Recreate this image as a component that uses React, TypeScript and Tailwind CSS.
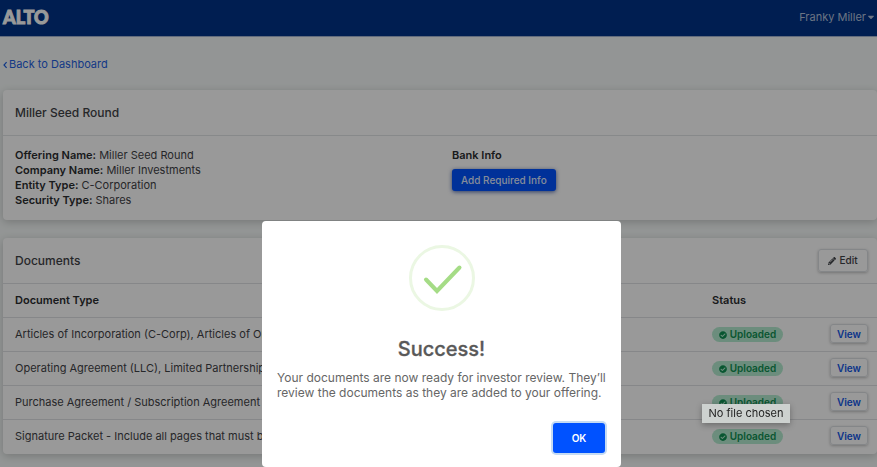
import { FaCaretDown, FaCheckCircle, FaPencilAlt } from 'react-icons/fa';

const details = [
  { label: 'Offering Name:', value: 'Miller Seed Round' },
  { label: 'Company Name:', value: 'Miller Investments' },
  { label: 'Entity Type:', value: 'C-Corporation' },
  { label: 'Security Type:', value: 'Shares' },
];

const documents = [
  'Articles of Incorporation (C-Corp), Articles of Organization (LLC)',
  'Operating Agreement (LLC), Limited Partnership Agreement (LP)',
  'Purchase Agreement / Subscription Agreement',
  'Signature Packet - Include all pages that must be signed',
];

export default function App() {
  return (
    <div className="min-h-screen bg-[#f5f9f8] font-['Inter',sans-serif] text-[11px] leading-[15px] text-[#3f4246]">
      <header className="flex h-[37px] items-center justify-between border-b border-[#a3b4d0] bg-[#003287] pb-[2px] pl-[3px] pr-px">
        <a href="#" className="font-['Lato',sans-serif] text-[18px] font-black leading-[24px] text-white [-webkit-text-stroke:1px_white]">ALTO</a>
        <button className="flex items-center text-[#b3c1db]">
          Franky Miller
          <FaCaretDown className="size-2.5" />
        </button>
      </header>

      <main className="pl-[3px]">
        <a href="#" className="mt-[20px] flex w-fit items-center text-[#1f5fe0]">
          <svg viewBox="0 0 6 8" fill="none" className="h-2 w-[6px]">
            <path d="M3.6 1.2 1 4l2.6 2.8" stroke="currentColor" strokeWidth="1.2" />
          </svg>
          Back to Dashboard
        </a>

        <section className="mt-[18px] rounded bg-white shadow-[0_2px_8px_rgba(0,0,0,0.2)]">
          <h2 className="flex h-[46px] items-center border-b border-[#e2e4e6] px-3 text-[12px] font-medium">Miller Seed Round</h2>
          <div className="grid grid-cols-2 gap-6 px-3 py-3">
            <dl>
              {details.map((item) => (
                <div key={item.label} className="flex gap-[3px]">
                  <dt className="font-semibold text-[#2b2d30]">{item.label}</dt>
                  <dd>{item.value}</dd>
                </div>
              ))}
            </dl>
            <div>
              <h3 className="font-semibold text-[#2b2d30]">Bank Info</h3>
              <button className="mt-[6px] h-[22px] rounded-[3px] bg-[#0052ff] px-[9px] text-[10px] font-medium leading-[15px] text-[#dfe8ff] shadow-[0_1px_4px_rgba(0,40,140,0.7)]">
                Add Required Info
              </button>
            </div>
          </div>
        </section>

        <section className="mt-[18px] rounded bg-white shadow-[0_2px_8px_rgba(0,0,0,0.2)]">
          <div className="flex h-[45px] items-center justify-between pl-3 pr-[9px]">
            <h2 className="text-[12px] font-medium">Documents</h2>
            <button className="flex h-[23px] w-[50px] items-center justify-center gap-[3px] rounded-[3px] border border-[#dcdfe3] text-[10px] font-medium shadow-[0_1px_3px_rgba(0,0,0,0.25)]">
              <FaPencilAlt className="size-2" />
              Edit
            </button>
          </div>
          <table className="w-full table-fixed text-left">
            <thead>
              <tr className="h-[34px] border-t border-[#dfe2e5] text-[#2b2d30]">
                <th className="pl-3 font-semibold">Document Type</th>
                <th className="w-[90px] font-semibold">Status</th>
                <th className="w-[75px]" />
              </tr>
            </thead>
            <tbody>
              {documents.map((name) => (
                <tr key={name} className="h-[34px] border-t border-[#dfe2e5]">
                  <td className="truncate pl-3">{name}</td>
                  <td>
                    <span className="flex h-[15px] w-[71px] items-center justify-center gap-[3px] rounded-full bg-[#b5ecd0] text-[10px] font-semibold text-[#0f8f52]">
                      <FaCheckCircle className="size-2" />
                      Uploaded
                    </span>
                  </td>
                  <td className="pb-[2px] pr-[9px]">
                    <button className="ml-auto block h-[19px] w-[38px] rounded-[3px] border border-[#dcdfe3] text-[10px] font-semibold leading-none text-[#1458e6] shadow-[0_1px_3px_rgba(0,0,0,0.25)]">
                      View
                    </button>
                  </td>
                </tr>
              ))}
            </tbody>
          </table>
        </section>
      </main>

      <div className="fixed inset-0 flex items-end justify-center bg-black/40 pl-1.5">
        <div role="dialog" aria-labelledby="dialog-title" className="w-[359px] rounded bg-white px-[15px] pb-[14px] pt-6 text-[#666]">
          <svg viewBox="0 0 66 66" fill="none" className="mx-auto size-[66px]">
            <circle cx="33" cy="33" r="31.5" stroke="#ebf7e3" strokeWidth="3" />
            <path d="M17 34.5 28 46 50.5 22.5" stroke="#a5dc86" strokeWidth="4" strokeLinecap="round" />
          </svg>
          <h1 id="dialog-title" className="mt-6 text-center text-[20px] font-medium leading-7 text-[#595959] [-webkit-text-stroke:0.3px_#595959]">Success!</h1>
          <p className="mt-[7px] text-[12px] leading-[15px]">
            Your documents are now ready for investor review. They’ll review the documents as they are added to your offering.
          </p>
          <button className="ml-auto mr-px mt-[23px] block h-[30px] w-[52px] rounded-[3px] bg-[#0052ff] text-[10px] font-semibold text-white ring-2 ring-[#c5dbf3]">
            OK
          </button>
        </div>
      </div>

      <div role="tooltip" className="fixed bottom-[44px] right-[87px] h-[19px] w-[88px] bg-[#cdd1cf] text-center text-[11px] leading-[19px] text-[#222] shadow-[0_2px_6px_rgba(0,0,0,0.3)]">
        No file chosen
      </div>
    </div>
  );
}
